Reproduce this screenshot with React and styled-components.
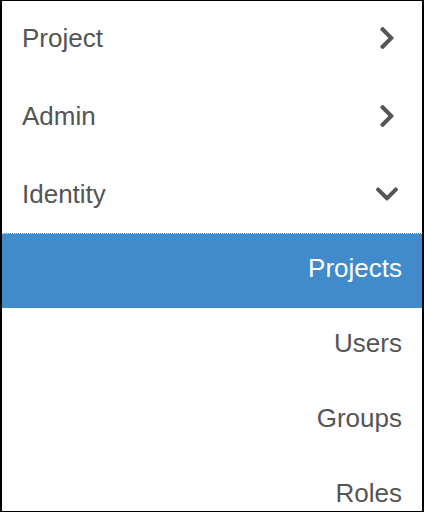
import React from "react";
import styled, { createGlobalStyle } from "styled-components";
import { FaChevronRight, FaChevronDown } from "react-icons/fa";

const Global = createGlobalStyle`
  html, body { margin: 0; padding: 0; background: #fff; }
  body { font-family: "Liberation Sans", Arial, Helvetica, sans-serif; }
`;

const Panel = styled.nav`
  box-sizing: border-box;
  width: 424px;
  height: 512px;
  overflow: hidden;
  border-style: solid;
  border-color: #000;
  border-width: 1px 2px 1px 2px;
  background: #fff;
  display: flex;
  flex-direction: column;
`;

const Header = styled.div`
  display: flex;
  align-items: center;
  justify-content: space-between;
  padding: 22px 22px ${(p) => (p.$open ? "24px" : "26px")} 20px;
  font-size: 26px;
  line-height: 30px;
  color: #555;
`;

const IconBox = styled.span`
  display: flex;
  align-items: center;
  justify-content: center;
  width: 26px;
  height: 30px;
  color: #555;
`;

const SubList = styled.div`
  display: flex;
  flex-direction: column;
`;

const SubItem = styled.div`
  box-sizing: border-box;
  height: 75px;
  padding: 20px 20px 25px 20px;
  text-align: right;
  font-size: 26px;
  line-height: 30px;
  color: ${(p) => (p.$active ? "#fff" : "#555")};
  background: ${(p) => (p.$active ? "#428bca" : "transparent")};
  border-top: 1px dotted ${(p) => (p.$active ? "#d6e6ef" : "transparent")};
  padding-top: 19px;
`;

const sections = [
  { label: "Project", open: false },
  { label: "Admin", open: false },
  { label: "Identity", open: true },
];

const subs = ["Projects", "Users", "Groups", "Roles"];

export default function App() {
  return (
    <>
      <Global />
      <Panel>
        {sections.map((s) => (
          <Header key={s.label} $open={s.open}>
            <span>{s.label}</span>
            <IconBox>
              {s.open ? <FaChevronDown size={26} /> : <FaChevronRight size={26} />}
            </IconBox>
          </Header>
        ))}
        <SubList>
          {subs.map((t, i) => (
            <SubItem key={t} $active={i === 0}>
              {t}
            </SubItem>
          ))}
        </SubList>
      </Panel>
    </>
  );
}
